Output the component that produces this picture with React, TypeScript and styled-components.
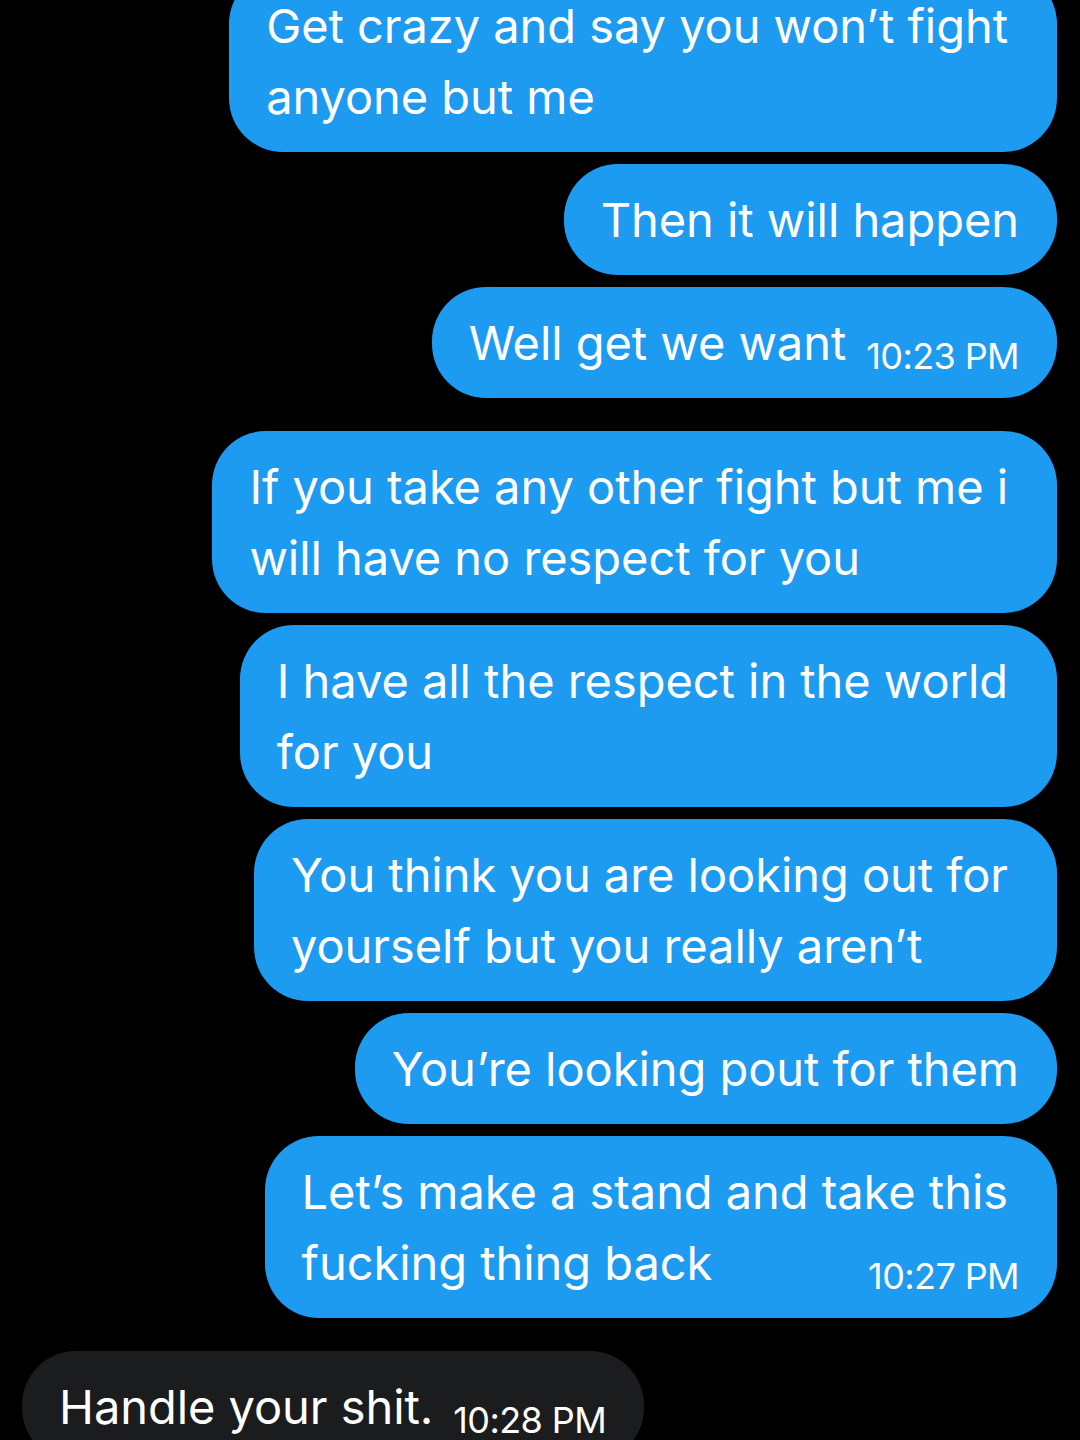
import { FC } from 'react';
import styled, { createGlobalStyle } from 'styled-components';

const GlobalStyle = createGlobalStyle`
    html, body {
        margin: 0;
        padding: 0;
        background: #000000;
    }
    body {
        font-family: Inter, "Noto Sans", "Liberation Sans", sans-serif;
        -webkit-font-smoothing: antialiased;
    }
`;

const Screen = styled.div`
    width: 1080px;
    height: 1440px;
    overflow: hidden;
    background: #000000;
`;

const Thread = styled.div`
    display: flex;
    flex-direction: column;
    margin-top: -30px;
    padding: 0 23px 0 22px;
`;

const Group = styled.div<{ $side: 'out' | 'in' }>`
    display: flex;
    flex-direction: column;
    align-items: ${p => (p.$side === 'out' ? 'flex-end' : 'flex-start')};
    gap: 12px;
    margin-bottom: 33px;
`;

const Bubble = styled.div<{ $side: 'out' | 'in' }>`
    background: ${p => (p.$side === 'out' ? '#1d9bf0' : '#1b1c1e')};
    color: #ffffff;
    border-radius: 54px;
    padding: 20px 38px 20px 37px;
    font-size: 47px;
    line-height: 71px;
    letter-spacing: -0.05px;
    white-space: nowrap;
`;

const Line = styled.div<{ $wrapped: boolean }>`
    display: flex;
    align-items: baseline;
    justify-content: space-between;
    gap: 20px;
    padding-right: ${p => (p.$wrapped ? '11px' : '0')};
`;

const Time = styled.span`
    font-size: 36px;
    line-height: 1;
    letter-spacing: -0.6px;
    position: relative;
    top: 9px;
`;

type Message = { lines: string[]; time?: string };

const outgoing: Message[][] = [
    [
        { lines: ['Get crazy and say you won’t fight', 'anyone but me'] },
        { lines: ['Then it will happen'] },
        { lines: ['Well get we want'], time: '10:23 PM' },
    ],
    [
        { lines: ['If you take any other fight but me i', 'will have no respect for you'] },
        { lines: ['I have all the respect in the world', 'for you'] },
        { lines: ['You think you are looking out for', 'yourself but you really aren’t'] },
        { lines: ['You’re looking pout for them'] },
        { lines: ['Let’s make a stand and take this', 'fucking thing back'], time: '10:27 PM' },
    ],
];

const incoming: Message[] = [{ lines: ['Handle your shit.'], time: '10:28 PM' }];

const MessageBubble: FC<{ msg: Message; side: 'out' | 'in' }> = ({ msg, side }) => (
    <Bubble $side={side}>
        {msg.lines.map((text, i) => {
            const last = i === msg.lines.length - 1;
            return (
                <Line key={i} $wrapped={!last}>
                    <span>{text}</span>
                    {last && msg.time && <Time>{msg.time}</Time>}
                </Line>
            );
        })}
    </Bubble>
);

export default function App() {
    return (
        <Screen>
            <GlobalStyle />
            <Thread>
                {outgoing.map((group, g) => (
                    <Group $side="out" key={g}>
                        {group.map((msg, i) => (
                            <MessageBubble msg={msg} side="out" key={i} />
                        ))}
                    </Group>
                ))}
                <Group $side="in">
                    {incoming.map((msg, i) => (
                        <MessageBubble msg={msg} side="in" key={i} />
                    ))}
                </Group>
            </Thread>
        </Screen>
    );
}
